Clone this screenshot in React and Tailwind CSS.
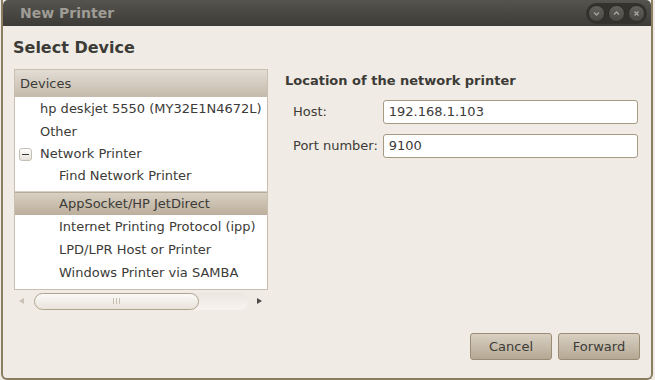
import { useState } from 'react';

const font = { fontFamily: '"DejaVu Sans", "Liberation Sans", sans-serif' };

function WinButton({ children }) {
  return (
    <div className="flex h-[17px] w-[17px] items-center justify-center rounded-full border border-[#2e2d2a] bg-gradient-to-b from-[#62615c] to-[#4a4945]">
      {children}
    </div>
  );
}

function TreeRow({ children, indent = 'pl-[25px]', selected, expander, tall, extra = '' }) {
  return (
    <div
      className={`flex items-center text-[13px] text-[#3c3b37] ${tall ? 'h-[23px]' : 'h-[22px]'} ${indent} ${extra} ${
        selected ? 'bg-gradient-to-b from-[#d8d0c3] to-[#bcae9c] border-t border-[#b8ab98]' : ''
      }`}
    >
      {expander && (
        <div className="-ml-[21px] mr-[8px] flex h-[13px] w-[13px] items-center justify-center rounded-[3px] border border-[#c5bfb5] bg-gradient-to-b from-white to-[#e6e1d9]">
          <div className="h-px w-[7px] bg-[#3c3b37]" />
        </div>
      )}
      {children}
    </div>
  );
}

export default function App() {
  const [host, setHost] = useState('192.168.1.103');
  const [port, setPort] = useState('9100');

  return (
    <div className="h-[380px] w-[655px] overflow-hidden bg-[#f0ebe4]" style={font}>
      <div className="flex h-full flex-col rounded-b-[6px] border-x-2 border-b-2 border-[#8a7d62] border-t-0 ml-px mr-[2px]">
        {/* title bar */}
        <div className="flex h-[26px] items-center justify-between rounded-t-[5px] bg-gradient-to-b from-[#55544f] to-[#3c3b37] pl-[17px] pr-[4px]">
          <span className="text-[14px] font-bold text-[#9e9c95]">New Printer</span>
          <div className="flex gap-[3px] rounded-full bg-[#33322f] p-[2px]">
            <WinButton>
              <svg width="9" height="9" viewBox="0 0 9 9"><path d="M2 3.5 L4.5 6 L7 3.5" stroke="#a9a79f" strokeWidth="1.3" fill="none" /></svg>
            </WinButton>
            <WinButton>
              <svg width="9" height="9" viewBox="0 0 9 9"><path d="M2 5.5 L4.5 3 L7 5.5" stroke="#a9a79f" strokeWidth="1.3" fill="none" /></svg>
            </WinButton>
            <WinButton>
              <svg width="9" height="9" viewBox="0 0 9 9"><path d="M2.5 2.5 L6.5 6.5 M6.5 2.5 L2.5 6.5" stroke="#a9a79f" strokeWidth="1.3" fill="none" /></svg>
            </WinButton>
          </div>
        </div>

        {/* body */}
        <div className="flex flex-1 flex-col px-[10px] pb-[18px]">
          <h1 className="pt-[10px] text-[16px] font-bold text-[#3c3b37]">Select Device</h1>

          <div className="mt-[9px] flex flex-1 gap-[17px]">
            {/* left: tree */}
            <div className="flex w-[255px] flex-col pl-[1px]">
              <div className="h-[221px] border border-[#c9bfaf] bg-white">
                <div className="flex h-[27px] items-center bg-gradient-to-b from-[#e2ddd5] to-[#c5baab] pl-[5px] text-[13px] text-[#3c3b37]">
                  Devices
                </div>
                <div className="pt-[1px]">
                  <TreeRow>hp deskjet 5550 (MY32E1N4672L)</TreeRow>
                  <TreeRow extra="mt-px">Other</TreeRow>
                  <TreeRow expander>Network Printer</TreeRow>
                  <TreeRow indent="pl-[44px]">Find Network Printer</TreeRow>
                  <div className="mt-[4px] h-px bg-[#d6cfc4]" />
                  <TreeRow indent="pl-[44px]" selected tall>AppSocket/HP JetDirect</TreeRow>
                  <TreeRow indent="pl-[44px]" tall>Internet Printing Protocol (ipp)</TreeRow>
                  <TreeRow indent="pl-[44px]" tall>LPD/LPR Host or Printer</TreeRow>
                  <TreeRow indent="pl-[44px]" tall>Windows Printer via SAMBA</TreeRow>
                </div>
              </div>
              {/* scrollbar */}
              <div className="mt-px flex h-[20px] items-center">
                <svg width="20" height="20" viewBox="0 0 20 20"><path d="M10 7 L5 10 L10 13 Z" fill="#c8c2b8" /></svg>
                <div className="flex h-[17px] flex-1 items-center rounded-full bg-gradient-to-b from-[#ebe6df] to-[#f7f4f0]">
                  <div className="flex h-[17px] w-[165px] items-center justify-center rounded-full border border-[#b1a48e] bg-gradient-to-b from-[#fbfaf8] to-[#e9e3da]">
                    <div className="flex gap-[2px]">
                      <div className="h-[6px] w-px bg-[#c7bfb2]" />
                      <div className="h-[6px] w-px bg-[#c7bfb2]" />
                      <div className="h-[6px] w-px bg-[#c7bfb2]" />
                    </div>
                  </div>
                </div>
                <svg width="20" height="20" viewBox="0 0 20 20"><path d="M9 7 L14 10 L9 13 Z" fill="#4e4c47" /></svg>
              </div>
            </div>

            {/* right: form */}
            <div className="flex flex-1 flex-col">
              <div className="pt-[2px] text-[13px] font-bold text-[#3c3b37]">Location of the network printer</div>
              <div className="mt-[9px] grid grid-cols-[auto_1fr] items-center gap-x-[5px] gap-y-[10px] pl-[8px] pr-[3px] text-[13px] text-[#3c3b37]">
                <label>Host:</label>
                <input
                  value={host}
                  onChange={(e) => setHost(e.target.value)}
                  className="h-[24px] rounded-[3px] border border-[#a79a84] bg-white px-[5px] text-[13px] text-[#3c3b37] outline-none"
                  style={font}
                />
                <label>Port number:</label>
                <input
                  value={port}
                  onChange={(e) => setPort(e.target.value)}
                  className="h-[24px] rounded-[3px] border border-[#a79a84] bg-white px-[5px] text-[13px] text-[#3c3b37] outline-none"
                  style={font}
                />
              </div>
            </div>
          </div>

          {/* buttons */}
          <div className="flex justify-end gap-[6px] pr-[1px]">
            <button className="h-[27px] w-[82px] rounded-[3px] border border-[#9a8c75] bg-gradient-to-b from-[#d9d0c2] to-[#b5a894] text-[13px] text-[#3c3b37]" style={font}>
              Cancel
            </button>
            <button className="h-[27px] w-[82px] rounded-[3px] border border-[#9a8c75] bg-gradient-to-b from-[#d9d0c2] to-[#b5a894] text-[13px] text-[#3c3b37]" style={font}>
              Forward
            </button>
          </div>
        </div>
      </div>
    </div>
  );
}
